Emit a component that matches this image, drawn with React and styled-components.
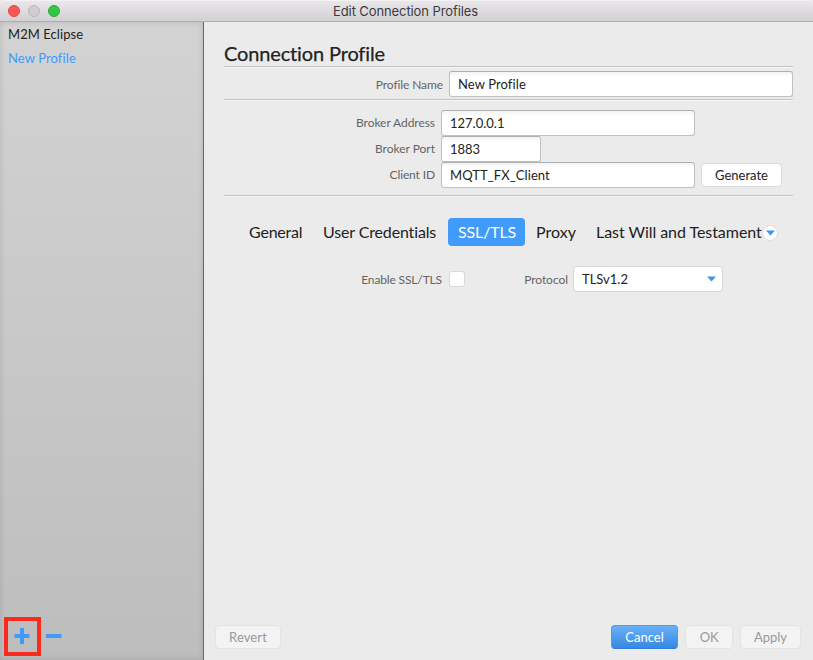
import React from 'react';
import styled, { createGlobalStyle } from 'styled-components';

const GlobalStyle = createGlobalStyle`
  * { box-sizing: border-box; }
  body { margin: 0; background: #ebebeb; }
  button, input { font: inherit; }
`;

const Window = styled.div`
  width: 813px;
  height: 660px;
  display: flex;
  flex-direction: column;
  overflow: hidden;
  background: #ebebeb;
  font-family: Lato, sans-serif;
  font-size: 13px;
  font-weight: 400;
  font-variant-ligatures: none;
  color: #222;
`;

const TitleBar = styled.header`
  height: 22px;
  flex: none;
  display: grid;
  grid-template-columns: 100px 1fr 102px;
  align-items: center;
  background: linear-gradient(#e9e7e9, #d2d0d2);
  border-top: 1px solid #f4f3f4;
  border-bottom: 1px solid #b0aeb0;
  border-radius: 5px 5px 0 0;
`;

const Lights = styled.div`
  display: flex;
  gap: 8px;
  padding-left: 8px;
`;

const Light = styled.span`
  width: 12px;
  height: 12px;
  border-radius: 50%;
  background: ${(p) => p.$fill};
  border: 1px solid ${(p) => p.$edge};
`;

const WindowTitle = styled.div`
  text-align: center;
  font: 400 13px/20px Inter, sans-serif;
  letter-spacing: -0.1px;
  color: #3c3a3c;
  white-space: nowrap;
`;

const Body = styled.div`
  flex: 1;
  display: flex;
  min-height: 0;
`;

const Sidebar = styled.aside`
  width: 204px;
  flex: none;
  display: flex;
  flex-direction: column;
  justify-content: space-between;
  background: linear-gradient(#d3d3d3, #bdbdbd);
  border-right: 1px solid #666;
  box-shadow: inset 0 0 6px rgba(0, 0, 0, 0.13);
`;

const ProfileList = styled.div`
  display: flex;
  flex-direction: column;
`;

const ProfileItem = styled.div`
  height: 24px;
  padding-left: 8px;
  line-height: 25px;
  letter-spacing: ${(p) => p.$track || 0}px;
  color: ${(p) => (p.$active ? '#3e9afc' : '#222')};
`;

const ListTools = styled.div`
  display: flex;
  align-items: center;
  padding: 0 0 4px 4px;
  gap: 5px;
`;

const HighlightFrame = styled.div`
  width: 37px;
  height: 39px;
  padding: 0 1px 1px 0;
  border: 4px solid #fb2a1d;
  display: flex;
  align-items: center;
  justify-content: center;
`;

const MinusIcon = styled.svg`
  margin-bottom: 2px;
`;

const Main = styled.main`
  flex: 1;
  display: flex;
  flex-direction: column;
  padding: 20px 12px 11px;
`;

const Sheet = styled.section`
  width: 569px;
  margin-left: 8px;
`;

const Heading = styled.h1`
  margin: 0;
  height: 24px;
  line-height: 23px;
  font-size: 20px;
  font-weight: 400;
  letter-spacing: ${(p) => p.$track || 0}px;
  -webkit-text-stroke: 0.25px #222;
`;

const Rule = styled.hr`
  margin: 0;
  height: 2px;
  border: 0;
  border-top: 1px solid #c2c2c2;
  background: #f8f8f8;
`;

const NameRow = styled.div`
  height: 31px;
  display: grid;
  grid-template-columns: 219px 344px;
  column-gap: 6px;
  align-items: center;
  padding-top: 1px;
`;

const BrokerForm = styled.div`
  height: 94px;
  padding-top: 9px;
  display: grid;
  grid-template-columns: 211px 254px 81px;
  grid-auto-rows: 26px;
  column-gap: 6px;
  align-items: center;
`;

const Label = styled.label`
  text-align: right;
  font-size: 12px;
  color: #646464;
  white-space: nowrap;
  padding-bottom: ${(p) => p.$lift || 0}px;
  letter-spacing: ${(p) => p.$track || 0}px;
`;

const Field = styled.input`
  width: ${(p) => p.$width}px;
  height: 26px;
  padding: 0 8px;
  outline: none;
  color: #222;
  letter-spacing: ${(p) => p.$track || 0}px;
  background: linear-gradient(#f3f3f3, #fff 5px);
  border: 1px solid #c0c0c0;
  border-top-color: #aeaeae;
  border-radius: 3px;
`;

const Button = styled.button`
  width: ${(p) => p.$width}px;
  height: 24px;
  padding: 0;
  border: 1px solid #dcdcdc;
  border-radius: 4px;
  background: #fff;
  color: #222;
  letter-spacing: ${(p) => p.$track || 0}px;

  &:disabled {
    color: #999;
    background: #f3f3f3;
    border-color: #e3e3e3;
  }
`;

const RevertButton = styled(Button)`
  margin-left: -1px;
`;

const PrimaryButton = styled(Button)`
  color: #fff;
  background: linear-gradient(#6ab1f9, #3688e2);
  border-color: #4b9bee;
  border-bottom-color: #2f7fd4;
`;

const GenerateCell = styled.div`
  grid-column: 3;
  display: flex;
`;

const Tabs = styled.nav`
  display: flex;
  align-items: center;
  margin-top: 21px;
  padding-left: 15px;
  gap: 1px;
`;

const Tab = styled.div`
  height: 28px;
  width: ${(p) => p.$width}px;
  padding-left: 10px;
  border-radius: 4px;
  font-size: 16px;
  line-height: 28px;
  white-space: nowrap;
  letter-spacing: ${(p) => p.$track || 0}px;
  color: ${(p) => (p.$active ? '#fff' : '#222')};
  background: ${(p) => (p.$active ? '#419bfb' : 'transparent')};
`;

const MoreTabs = styled.div`
  width: 16px;
  height: 16px;
  margin-top: 1px;
  padding-top: 1px;
  border-radius: 50%;
  background: #fff;
  border: 1px solid #dedede;
  display: flex;
  align-items: center;
  justify-content: center;
`;

const SslOptions = styled.div`
  display: grid;
  grid-template-columns: 218px 23px 103px 150px;
  align-items: center;
  margin-top: 20px;
`;

const Checkbox = styled.span`
  width: 16px;
  height: 16px;
  margin-left: 7px;
  border: 1px solid #d8d8d8;
  border-radius: 3px;
  background: #fff;
`;

const Select = styled.div`
  width: 150px;
  height: 26px;
  margin-left: 5px;
  padding: 0 6px 0 8px;
  display: flex;
  align-items: center;
  justify-content: space-between;
  border: 1px solid #d8d8d8;
  border-radius: 4px;
  background: #fff;
`;

const Footer = styled.footer`
  display: flex;
  align-items: center;
  gap: 7px;
  margin-top: auto;
`;

const Spacer = styled.div`
  flex: 1;
`;

function Caret() {
  return (
    <svg width="9" height="6" viewBox="0 0 9 6">
      <path d="M0 .5h9L4.5 5.5Z" fill="#3f95ee" />
    </svg>
  );
}

export default function App() {
  return (
    <>
      <GlobalStyle />
      <Window>
        <TitleBar>
          <Lights>
            <Light $fill="#fc5753" $edge="#dd4a43" />
            <Light $fill="#cfcdcf" $edge="#b9b7b9" />
            <Light $fill="#33c748" $edge="#2dac2f" />
          </Lights>
          <WindowTitle>Edit Connection Profiles</WindowTitle>
        </TitleBar>
        <Body>
          <Sidebar>
            <ProfileList>
              <ProfileItem $track={0.07}>M2M Eclipse</ProfileItem>
              <ProfileItem $active $track={0.1}>New Profile</ProfileItem>
            </ProfileList>
            <ListTools>
              <HighlightFrame>
                <svg width="16" height="16" viewBox="0 0 16 16">
                  <path d="M6 0h4v6h5.5v4H10v6H6v-6H.5V6H6Z" fill="#3e9afc" />
                </svg>
              </HighlightFrame>
              <MinusIcon width="16" height="4" viewBox="0 0 16 4">
                <path d="M0 0h15.5v4H0Z" fill="#3e9afc" />
              </MinusIcon>
            </ListTools>
          </Sidebar>
          <Main>
            <Sheet>
              <Heading $track={-0.14}>Connection Profile</Heading>
              <Rule />
              <NameRow>
                <Label $track={-0.1}>Profile Name</Label>
                <Field $width={344} $track={0.1} defaultValue="New Profile" />
              </NameRow>
              <Rule />
              <BrokerForm>
                <Label $lift={2} $track={-0.05}>Broker Address</Label>
                <Field $width={254} defaultValue="127.0.0.1" />
                <span />
                <Label $lift={2} $track={-0.02}>Broker Port</Label>
                <Field $width={100} defaultValue="1883" />
                <span />
                <Label $lift={2} $track={-0.12}>Client ID</Label>
                <Field $width={254} $track={0.08} defaultValue="MQTT_FX_Client" />
                <GenerateCell>
                  <Button $width={82}>Generate</Button>
                </GenerateCell>
              </BrokerForm>
              <Rule />
              <Tabs>
                <Tab $width={73} $track={-0.2}>General</Tab>
                <Tab $width={134} $track={-0.14}>User Credentials</Tab>
                <Tab $width={77} $active $track={-0.15}>SSL/TLS</Tab>
                <Tab $width={59}>Proxy</Tab>
                <Tab $width={175} $track={-0.05}>Last Will and Testament</Tab>
                <MoreTabs><Caret /></MoreTabs>
              </Tabs>
              <SslOptions>
                <Label $track={-0.14}>Enable SSL/TLS</Label>
                <Checkbox />
                <Label $track={-0.05}>Protocol</Label>
                <Select>TLSv1.2<Caret /></Select>
              </SslOptions>
            </Sheet>
            <Footer>
              <RevertButton $width={66} $track={0.1} disabled>Revert</RevertButton>
              <Spacer />
              <PrimaryButton $width={67}>Cancel</PrimaryButton>
              <Button $width={48} $track={-0.2} disabled>OK</Button>
              <Button $width={61} disabled>Apply</Button>
            </Footer>
          </Main>
        </Body>
      </Window>
    </>
  );
}
